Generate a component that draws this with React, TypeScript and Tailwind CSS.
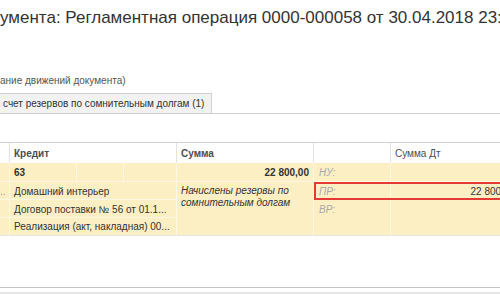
export default function App() {
  return (
    <div className="w-[500px] h-[300px] overflow-hidden bg-white flex flex-col font-['Liberation_Sans',Arial,sans-serif] text-[#333]">
      {/* Title */}
      <div className="h-[36px] shrink-0 pt-[7px] whitespace-nowrap text-[17px] leading-[22px] text-[#333]">
        умента: Регламентная операция 0000-000058 от 30.04.2018 23:00:00
      </div>

      {/* Subtitle */}
      <div className="mt-[38px] h-[14px] shrink-0 whitespace-nowrap text-[10px] leading-[14px] text-[#555]">
        ание движений документа)
      </div>

      {/* Tabs */}
      <div className="mt-[5px] h-[21px] shrink-0 flex border-b border-[#cfcfcf]">
        <div className="h-[20px] pl-[3px] pr-[7px] bg-[#f2f2f2] border border-l-0 border-b-0 border-[#d0d0d0] text-[10px] leading-[19px] text-[#333] whitespace-nowrap">
          счет резервов по сомнительным долгам (1)
        </div>
      </div>

      {/* Table */}
      <div className="mt-[28px] shrink-0 w-[519px] grid grid-cols-[10px_167px_137px_77px_128px] grid-rows-[20px_19px_18px_18px_17px] border-t border-[#d0d0d0] text-[10px] leading-[13px]">
        {/* header */}
        <div className="border-r border-[#e2e2e2]" />
        <div className="border-r border-[#e2e2e2] pl-[4px] pt-[4px] font-bold text-[#4d4d4d]">Кредит</div>
        <div className="border-r border-[#e2e2e2] pl-[4px] pt-[4px] font-bold text-[#4d4d4d]">Сумма</div>
        <div className="border-r border-[#e2e2e2]" />
        <div className="pl-[4px] pt-[4px] text-[#4d4d4d]">Сумма Дт</div>

        {/* col 1 */}
        <div className="col-start-1 row-start-2 bg-[#fcefc4] border-r border-b border-[#fff8e4]" />
        <div className="col-start-1 row-start-3 bg-[#fcefc4] border-r border-b border-[#fff8e4] overflow-hidden text-[#999] pt-[3px] whitespace-nowrap">..</div>
        <div className="col-start-1 row-start-4 bg-[#fcefc4] border-r border-b border-[#fff8e4]" />
        <div className="col-start-1 row-start-5 bg-[#fcefc4] border-r border-[#fff8e4]" />

        {/* Кредит */}
        <div className="col-start-2 row-start-2 bg-[#fcefc4] border-r border-b border-[#fff8e4] flex">
          <div className="w-[67px] border-r border-[#fff8e4] pl-[4px] pt-[3px] font-bold">63</div>
          <div className="w-[47px] border-r border-[#fff8e4]" />
          <div className="flex-1" />
        </div>
        <div className="col-start-2 row-start-3 bg-[#fcefc4] border-r border-b border-[#fff8e4] pl-[4px] pt-[3px] whitespace-nowrap">Домашний интерьер</div>
        <div className="col-start-2 row-start-4 bg-[#fcefc4] border-r border-b border-[#fff8e4] pl-[4px] pt-[3px] whitespace-nowrap">Договор поставки № 56 от 01.1...</div>
        <div className="col-start-2 row-start-5 bg-[#fcefc4] border-r border-[#fff8e4] pl-[4px] pt-[2px] whitespace-nowrap">Реализация (акт, накладная) 00...</div>

        {/* Сумма */}
        <div className="col-start-3 row-start-2 bg-[#fcefc4] border-r border-b border-[#fff8e4] pr-[4px] pt-[3px] text-right font-bold">22 800,00</div>
        <div className="col-start-3 row-start-3 row-span-3 bg-[#fcefc4] border-r border-[#fff8e4] pl-[4px] pt-[3px] italic leading-[12px]">
          Начислены резервы по
          <br />
          сомнительным долгам
        </div>

        {/* НУ / ПР / ВР */}
        <div className="col-start-4 row-start-2 bg-[#fcefc4] border-r border-b border-[#fff8e4] pl-[5px] pt-[3px] italic text-[#aaa]">НУ:</div>
        <div className="col-start-4 row-start-3 bg-[#fcefc4] border-r border-b border-[#fff8e4] pl-[5px] pt-[3px] italic text-[#aaa]">ПР:</div>
        <div className="col-start-4 row-start-4 row-span-2 bg-[#fcefc4] border-r border-[#fff8e4] pl-[5px] pt-[3px] italic text-[#aaa]">ВР:</div>

        {/* Сумма Дт */}
        <div className="col-start-5 row-start-2 bg-[#fcefc4] border-b border-[#fff8e4]" />
        <div className="col-start-5 row-start-3 bg-[#fcefc4] border-b border-[#fff8e4] pr-[4px] pt-[3px] text-right">22 800,00</div>
        <div className="col-start-5 row-start-4 row-span-2 bg-[#fcefc4]" />

        {/* selection frame */}
        <div className="col-start-4 col-span-2 row-start-3 border-2 border-[#e53935] pointer-events-none" />
      </div>
      <div className="w-[500px] h-px shrink-0 bg-[#e6e6e6]" />

      {/* bottom lines */}
      <div className="flex-1" />
      <div className="h-px shrink-0 bg-[#c4c4c4]" />
      <div className="mt-[4px] h-[2px] shrink-0 bg-[#e6e6e6]" />
      <div className="h-[6px] shrink-0" />
    </div>
  );
}
